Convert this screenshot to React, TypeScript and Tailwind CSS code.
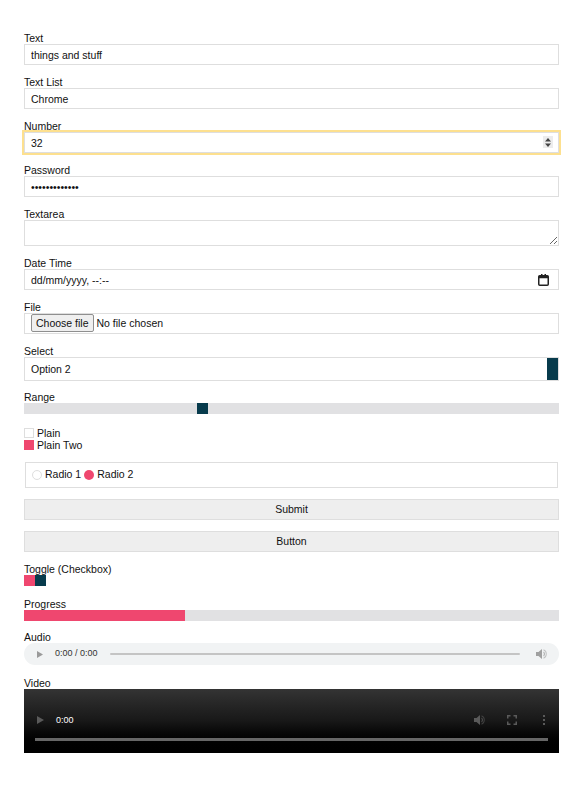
import { useState } from 'react'

const field =
  'block w-full border border-[#dedede] bg-white px-[6px] text-[10.5px] leading-[12px] text-[#111] outline-none'

function Label({ text }: { text: string }) {
  return <label className="block h-3 text-[10.5px] leading-3 text-[#111]">{text}</label>
}

function VolumeIcon({ color }: { color: string }) {
  return (
    <svg width="11" height="10" viewBox="0 0 11 10" fill={color}>
      <path d="M0 3h2.5L6 0v10L2.5 7H0z" />
      <path d="M7.5 2.5a3 3 0 0 1 0 5v-1.4a1.7 1.7 0 0 0 0-2.2z" />
      <path d="M7.5 0.3a5 5 0 0 1 0 9.4v-1.2a3.8 3.8 0 0 0 0-7z" opacity="0.6" />
    </svg>
  )
}

export default function App() {
  const [toggle, setToggle] = useState(true)

  return (
    <main className="w-[582px] bg-white pt-8 pl-6 pr-[23px] font-['Liberation_Sans',Arial,sans-serif] text-[10.5px] text-[#111]">
      {/* text fields */}
      <div className="mb-[11px]">
        <Label text="Text" />
        <input type="text" defaultValue="things and stuff" className={field + ' h-[21px]'} />
      </div>
      <div className="mb-[11px]">
        <Label text="Text List" />
        <input type="text" defaultValue="Chrome" className={field + ' h-[21px]'} />
      </div>
      <div className="mb-[11px]">
        <Label text="Number" />
        <div className="relative">
          <input
            type="number"
            defaultValue={32}
            className={
              field +
              ' h-[21px] outline-2 outline-solid outline-[#fde08f] [appearance:textfield] [&::-webkit-inner-spin-button]:appearance-none [&::-webkit-outer-spin-button]:appearance-none'
            }
          />
          {/* spinner */}
          <span className="pointer-events-none absolute right-[6px] top-1 flex h-3 w-[10px] flex-col items-center justify-center gap-px bg-[#ececec]">
            <svg width="6" height="9" viewBox="0 0 6 9" fill="#444">
              <path d="M3 0l3 3.5H0z" />
              <path d="M3 9L0 5.5h6z" />
            </svg>
          </span>
        </div>
      </div>
      <div className="mb-[11px]">
        <Label text="Password" />
        <input type="password" defaultValue="thisisasecret" className={field + ' h-[21px]'} />
      </div>
      <div className="mb-[11px]">
        <Label text="Textarea" />
        <textarea rows={1} className={field + ' h-[26px] resize-y py-[2px]'} />
      </div>
      <div className="mb-[11px]">
        <Label text="Date Time" />
        <div className={field + ' flex h-[21px] items-center justify-between pr-[9px]'}>
          <span>dd/mm/yyyy, --:--</span>
          <svg width="11" height="12" viewBox="0 0 11 12">
            <rect x="3" y="0" width="1.5" height="2" fill="#222" />
            <rect x="6.5" y="0" width="1.5" height="2" fill="#222" />
            <rect x="0.75" y="1.75" width="9.5" height="9.5" rx="1" fill="none" stroke="#222" strokeWidth="1.5" />
            <rect x="0.75" y="1.75" width="9.5" height="2.5" fill="#222" />
          </svg>
        </div>
      </div>
      <div className="mb-[11px]">
        <Label text="File" />
        <div className={field + ' flex h-[21px] items-start gap-[3px] pl-[6px]'}>
          <span className="flex h-[18px] items-center rounded-[2px] border border-[#8f8f8f] bg-[#efefef] px-[4px]">
            Choose file
          </span>
          <span className="leading-[18px]">No file chosen</span>
        </div>
      </div>
      {/* select */}
      <div className="mb-[10px]">
        <Label text="Select" />
        <div className="relative">
          <select defaultValue="2" className={field + ' h-6 appearance-none'}>
            <option value="1">Option 1</option>
            <option value="2">Option 2</option>
            <option value="3">Option 3</option>
          </select>
          <span className="pointer-events-none absolute right-px top-px h-[22px] w-[11px] bg-[#073b4c]" />
        </div>
      </div>
      {/* range */}
      <div className="mb-[13px]">
        <Label text="Range" />
        <div className="relative h-[11px] w-full bg-[#e1e1e3]">
          <span className="absolute left-[173px] top-0 h-[11px] w-[11px] bg-[#073b4c]" />
        </div>
      </div>
      {/* checkboxes */}
      <div className="mb-[11px] flex flex-col">
        <label className="flex h-3 items-center gap-[3px] leading-3">
          <span className="h-[10px] w-[10px] border border-[#dedede] bg-white" />
          Plain
        </label>
        <label className="flex h-3 items-center gap-[3px] leading-3">
          <span className="h-[10px] w-[10px] bg-[#ef476f]" />
          Plain Two
        </label>
      </div>
      {/* radios */}
      <fieldset className="mx-px mb-[11px] flex h-[26px] items-center gap-[3px] border border-[#dedede] pl-[6px] pr-[7px]">
        <span className="h-[10px] w-[10px] rounded-full border border-[#dedede] bg-white" />
        <span>Radio 1</span>
        <span className="h-[10px] w-[10px] rounded-full bg-[#ef476f]" />
        <span>Radio 2</span>
      </fieldset>
      <button type="submit" className="mb-[11px] block h-[21px] w-full border border-[#dedede] bg-[#eeeeee] text-center text-[10.5px] text-[#111]">
        Submit
      </button>
      <button type="button" className="mb-[11px] block h-[21px] w-full border border-[#dedede] bg-[#eeeeee] text-center text-[10.5px] text-[#111]">
        Button
      </button>
      {/* toggle */}
      <div className="mb-3">
        <Label text="Toggle (Checkbox)" />
        <button type="button" onClick={() => setToggle(!toggle)} className="flex h-[11px] w-[22px]">
          <span className={toggle ? 'h-full w-[11px] bg-[#ef476f]' : 'h-full w-[11px] bg-[#e1e1e3]'} />
          <span className="h-full w-[11px] bg-[#073b4c]" />
        </button>
      </div>
      {/* progress */}
      <div className="mb-[10px]">
        <Label text="Progress" />
        <div className="h-[11px] w-full bg-[#e1e1e3]">
          <div className="h-full w-[30%] bg-[#ef476f]" />
        </div>
      </div>
      {/* audio */}
      <div className="mb-3">
        <Label text="Audio" />
        <div className="flex h-[22px] w-full items-center rounded-full bg-[#f1f3f4] pl-[13px] pr-3 text-[9px] text-[#333]">
          <svg width="6" height="7" viewBox="0 0 6 7" fill="#9a9a9a">
            <path d="M0 0l6 3.5L0 7z" />
          </svg>
          <span className="ml-3 whitespace-nowrap">0:00 / 0:00</span>
          <span className="ml-3 h-[2px] flex-1 rounded-full bg-[#c4c4c4]" />
          <span className="ml-4">
            <VolumeIcon color="#a0a0a0" />
          </span>
        </div>
      </div>
      {/* video */}
      <div>
        <Label text="Video" />
        <div className="flex h-16 w-full flex-col justify-end bg-gradient-to-b from-[#343434] via-[#181818] to-black pl-[11px] pr-[11px] pb-3">
          <div className="flex items-center text-[9px] text-white">
            <svg className="ml-[2px]" width="7" height="8" viewBox="0 0 7 8" fill="#5a5a5a">
              <path d="M0 0l7 4L0 8z" />
            </svg>
            <span className="ml-3">0:00</span>
            <span className="flex-1" />
            <VolumeIcon color="#5a5a5a" />
            <svg className="ml-[22px]" width="10" height="10" viewBox="0 0 10 10" fill="none" stroke="#5a5a5a" strokeWidth="1.5">
              <path d="M0.75 3.5V0.75H3.5M6.5 0.75h2.75V3.5M9.25 6.5v2.75H6.5M3.5 9.25H0.75V6.5" />
            </svg>
            <svg className="ml-[26px] mr-[3px]" width="2" height="10" viewBox="0 0 2 10" fill="#5a5a5a">
              <rect x="0" y="0" width="2" height="2" />
              <rect x="0" y="4" width="2" height="2" />
              <rect x="0" y="8" width="2" height="2" />
            </svg>
          </div>
          <div className="mt-[11px] h-[3px] w-full bg-[#666]" />
        </div>
      </div>
    </main>
  )
}
